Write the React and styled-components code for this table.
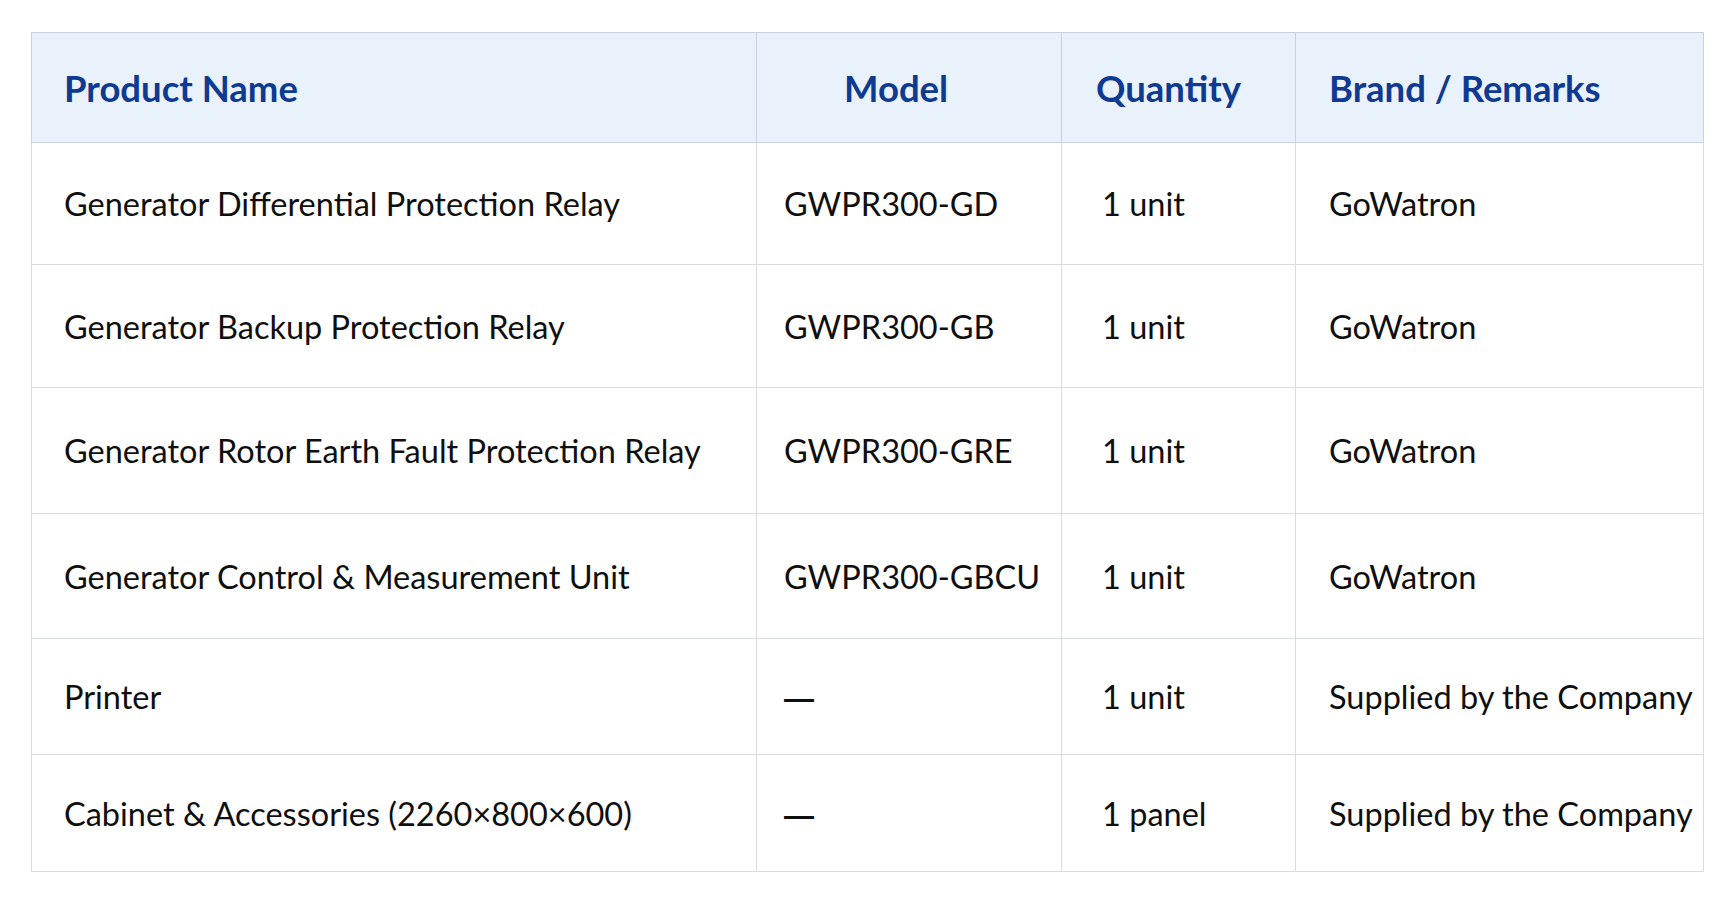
import React from "react";
import styled, { createGlobalStyle } from "styled-components";

const Global = createGlobalStyle`
  html, body { margin: 0; padding: 0; background: #ffffff; }
  body { font-family: Lato, "Open Sans", sans-serif; }
`;

const Page = styled.div`
  width: 1733px;
  height: 908px;
  box-sizing: border-box;
  padding: 32px 30px 0 31px;
  background: #ffffff;
`;

const Table = styled.table`
  width: 1672px;
  border-collapse: collapse;
  table-layout: fixed;
  border: 1.5px solid #cfd5df;
`;

const HeadCell = styled.th`
  height: 110px;
  box-sizing: border-box;
  padding: 0 0 0 ${(p) => p.$pad}px;
  background: #e9f1fb;
  color: #0e3a92;
  font-family: Lato, "Open Sans", sans-serif;
  font-weight: 700;
  font-size: 36.5px;
  text-align: left;
  border: 1.5px solid #cad2df;
`;

const Row = styled.tr`
  height: ${(p) => p.$h}px;
`;

const Cell = styled.td`
  box-sizing: border-box;
  padding: 0 0 0 ${(p) => p.$pad}px;
  color: #0f0f0f;
  font-family: Lato, "Open Sans", sans-serif;
  font-size: 32.5px;
  font-weight: 400;
  white-space: nowrap;
  border: 1.5px solid #d8dbe0;
`;

const Dash = styled.span`
  font-family: "Liberation Sans", Arial, sans-serif;
  font-size: 30px;
  font-weight: 700;
`;

const cols = [
  { w: 725, head: "Product Name", hp: 32, bp: 32 },
  { w: 305, head: "Model", hp: 87, bp: 27 },
  { w: 234, head: "Quantity", hp: 34, bp: 40 },
  { w: 408, head: "Brand / Remarks", hp: 33, bp: 33 },
];

const rows = [
  { h: 122, c: ["Generator Differential Protection Relay", "GWPR300-GD", "1 unit", "GoWatron"] },
  { h: 123, c: ["Generator Backup Protection Relay", "GWPR300-GB", "1 unit", "GoWatron"] },
  { h: 126, c: ["Generator Rotor Earth Fault Protection Relay", "GWPR300-GRE", "1 unit", "GoWatron"] },
  { h: 125, c: ["Generator Control & Measurement Unit", "GWPR300-GBCU", "1 unit", "GoWatron"] },
  { h: 116, c: ["Printer", null, "1 unit", "Supplied by the Company"] },
  { h: 117, c: ["Cabinet & Accessories (2260×800×600)", null, "1 panel", "Supplied by the Company"] },
];

export default function App() {
  return (
    <Page>
      <Global />
      <Table>
        <colgroup>
          {cols.map((c) => (
            <col key={c.head} style={{ width: c.w }} />
          ))}
        </colgroup>
        <thead>
          <tr>
            {cols.map((c) => (
              <HeadCell key={c.head} $pad={c.hp}>
                {c.head}
              </HeadCell>
            ))}
          </tr>
        </thead>
        <tbody>
          {rows.map((r, i) => (
            <Row key={i} $h={r.h}>
              {r.c.map((t, j) => (
                <Cell key={j} $pad={cols[j].bp}>
                  {t === null ? <Dash>—</Dash> : t}
                </Cell>
              ))}
            </Row>
          ))}
        </tbody>
      </Table>
    </Page>
  );
}
